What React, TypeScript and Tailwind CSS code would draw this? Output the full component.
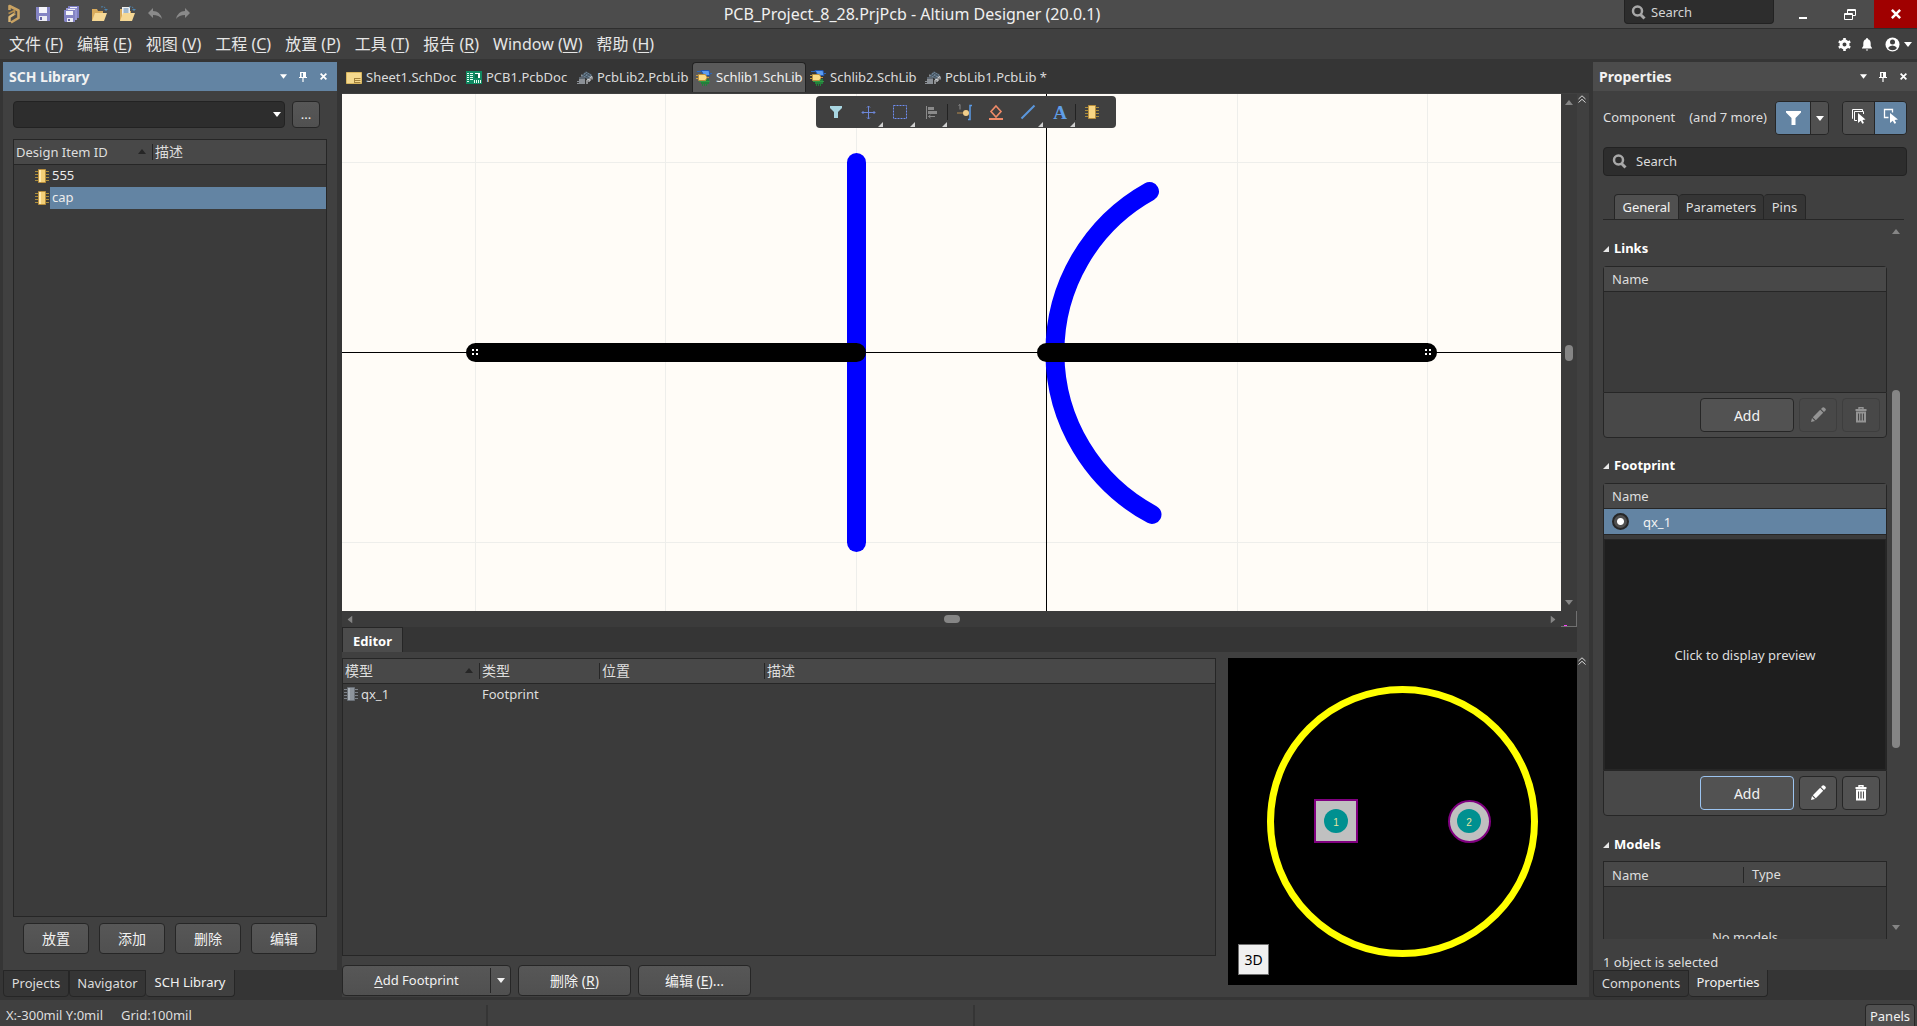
import React from 'react';
import clsx from 'clsx';

interface IconProps {
  className?: string;
}

const menuItems = [
  { label: '文件', hotkey: 'F' },
  { label: '编辑', hotkey: 'E' },
  { label: '视图', hotkey: 'V' },
  { label: '工程', hotkey: 'C' },
  { label: '放置', hotkey: 'P' },
  { label: '工具', hotkey: 'T' },
  { label: '报告', hotkey: 'R' },
  { label: 'Window', hotkey: 'W' },
  { label: '帮助', hotkey: 'H' },
];

const panelButton =
  'flex items-center justify-center rounded-[4px] border border-[#262626] bg-gradient-to-b from-[#575757] to-[#505050] text-[#f2f2f2]';

// Title bar icons
const AltiumLogo = () => (
  <svg width="14" height="20" viewBox="0 0 14 20" fill="none" strokeLinejoin="round">
    <path d="M2.500 6V2L11.500 6.500v7.500L4 18.500" stroke="#c9a262" strokeWidth="2.600" />
    <path d="M2.500 18v-5L8 9.500" stroke="#dbb878" strokeWidth="2.400" />
    <path d="M1.500 9.500L7.500 6.500v4" stroke="#b18b4d" strokeWidth="1.600" />
  </svg>
);

const SaveIcon = () => (
  <svg width="16" height="16" viewBox="0 0 16 16">
    <path d="M1 1h14v14H3l-2-2z" fill="#8484c4" />
    <path d="M4 1h8v6H4z" fill="#f5f5fa" />
    <path d="M4 10h8v5H4z" fill="#ececf4" />
    <path d="M5 11h2v3H5z" fill="#6464a4" />
  </svg>
);

const SaveAllIcon = () => (
  <svg width="17" height="16" viewBox="0 0 17 16">
    <path d="M5 0h11v12H5z" fill="#7c7cc0" />
    <path d="M7 1h7v2H7z" fill="#f0f0f8" />
    <path d="M3 2h11v12H3z" fill="#9696d4" />
    <path d="M5 3h7v3H5z" fill="#f0f0f8" />
    <path d="M1 4h11v12H2l-1-1z" fill="#8484c4" />
    <path d="M3 5h7v4H3z" fill="#f5f5fa" />
    <path d="M4 12h6v4H4z" fill="#ececf4" />
    <path d="M5 13h2v2H5z" fill="#6464a4" />
  </svg>
);

const OpenIcon = ({ withPage = false }: { withPage?: boolean }) => (
  <svg width="17" height="16" viewBox="0 0 17 16">
    <path d="M1 3h5l1 2h5v10H1z" fill="#d9ab5c" />
    {withPage && (
      <>
        <path d="M3 1h8v9H3z" fill="#f0f0f0" />
        <path d="M4.500 3h5M4.500 5h5M4.500 7h5" stroke="#4f7fae" />
      </>
    )}
    <path d="M4 7h12l-3 8H1z" fill="#f6d895" />
    <path d="M10 1q4-1 5 2.500" fill="none" stroke="#4c86b4" strokeDasharray="2 1" />
    <path d="M13 3h4l-2 2z" fill="#4c86b4" />
  </svg>
);

const UndoIcon = ({ className }: IconProps) => (
  <svg width="16" height="14" viewBox="0 0 16 14" className={className}>
    <path d="M6 1v3q7 0 9 8-3-4-9-4v3L1 6z" fill="#8a8a8a" />
  </svg>
);

const Magnifier = () => (
  <svg width="15" height="15" viewBox="0 0 15 15" fill="none" stroke="#a8a8a8" className="shrink-0">
    <circle cx="6.500" cy="6" r="4.500" strokeWidth="2.500" />
    <path d="M9.500 9.500l4 4" strokeWidth="3" />
  </svg>
);

const Caret = ({ className }: IconProps) => (
  <svg width="8" height="5" viewBox="0 0 8 5" className={className} fill="currentColor">
    <path d="M0 0h8L4 5z" />
  </svg>
);

const PinIcon = () => (
  <svg width="8" height="10" viewBox="0 0 8 10" fill="#fff">
    <path d="M1 0h6v5h1v1H4.600v4H3.400V6H0V5h1zM2.500 1v4H4V1z" fillRule="evenodd" />
  </svg>
);

const CrossIcon = ({ size = 7 }: { size?: number }) => (
  <svg width={size} height={size} viewBox="0 0 8 8" stroke="#fff" strokeWidth="2">
    <path d="M.7.700l6.600 6.600M7.300.700L.7 7.300" />
  </svg>
);

const ChipIcon = ({ gray = false }: { gray?: boolean }) => (
  <svg width="14" height="14" viewBox="0 0 14 14">
    <path d="M0 2.500h14M0 5.500h14M0 8.500h14M0 11.500h14" stroke={gray ? '#7b8087' : '#a98c3b'} />
    <path d="M3.500.5h7v13h-7z" fill={gray ? '#8d949c' : '#f3cf77'} stroke={gray ? '#6b7178' : '#b98f3c'} />
    <path d="M4 1h2v12H4z" fill={gray ? '#aab1b8' : '#ffe9ae'} />
  </svg>
);

const DoubleChevron = () => (
  <svg width="8" height="8" viewBox="0 0 8 8" fill="none" stroke="#d8d8d8">
    <path d="M.5 4L4 .800 7.500 4M.5 7.500L4 4.300l3.500 3.200" />
  </svg>
);

const PencilIcon = () => (
  <svg width="16" height="16" viewBox="0 0 16 16" fill="currentColor">
    <path d="M1 15l1-4 3 3zM2.800 10.200l7.400-7.400 3 3-7.400 7.400zM11 2l1.500-1.500q1-.8 2 .2l.8.800q1 1 .2 2L14 5z" />
  </svg>
);

const TrashIcon = () => (
  <svg width="12" height="16" viewBox="0 0 12 16" fill="none" stroke="currentColor">
    <path d="M.5 3h11" strokeWidth="2" />
    <path d="M4 2V.700h4V2" strokeWidth="1.400" />
    <path d="M2 5.500h8v9H2z" strokeWidth="2" />
    <path d="M4.700 6v8M7.300 6v8" strokeWidth="1.300" />
  </svg>
);

// Document tab icons
const SheetIcon = () => (
  <svg width="16" height="12" viewBox="0 0 16 12" className="shrink-0">
    <path d="M.5.5h15v11H.5z" fill="#f5d98d" stroke="#d9b65f" />
    <path d="M8.500 6.500h6M8.500 8.500h6M8.500 10.500h6M8.500 6v5" stroke="#a3823c" />
  </svg>
);

const PcbIcon = () => (
  <svg width="16" height="13" viewBox="0 0 16 13" className="shrink-0">
    <path d="M0 0h16v13H0z" fill="#108a62" />
    <path d="M1 2.500h2M4 2.500h3M1 4.500h2M4 4.500h3M1 6.500h2M4 6.500h3M1 8.500h2M4 8.500h3M1 10.500h2" stroke="#e6fff3" />
    <path d="M9 2h5v5H9z" fill="#fff" />
    <path d="M9 3h3v4H9z" fill="#0c6e4f" />
    <path d="M8.500 9v3M10.500 9v3M12.500 9v3M14.500 9v3" stroke="#e6fff3" />
  </svg>
);

const PcbLibIcon = () => (
  <svg width="16" height="14" viewBox="0 0 16 14" className="shrink-0">
    <path d="M4 5l5-4.500L15 4l-4 4z" fill="#6f8496" />
    <path d="M6 3.500l6 3.500M8 1.500l5.500 3.500M6 5.500l5-4M8.500 7l4.500-4.500" stroke="#42505c" />
    <path d="M2 6h6v7H2z" fill="#8b9096" />
    <path d="M2 6h6v2H2z" fill="#5c6670" />
    <path d="M0 10.500h2M0 12.500h2M4.500 3.500v2" stroke="#8b9096" />
    <path d="M10 13V9l2-1v3M13 10V6.500L15 5.500v3" stroke="#e3e6e9" fill="none" />
  </svg>
);

const SchLibIcon = () => (
  <svg width="16" height="16" viewBox="0 0 16 16" className="shrink-0">
    <path d="M1 1.500h6M11 3.500h5" stroke="#2e68b8" />
    <path d="M5 .5h8l1 5H8z" fill="#5c9cf0" stroke="#2057b0" />
    <path d="M5 9h8v5H5zM6 14v2h1v-2zM8 14v2h1v-2zM10 14v2h1v-2z" fill="#23803a" />
    <path d="M3 11.500h11" stroke="#2f9a45" />
    <path d="M0 5.500h4M0 8.500h4M10 7.500h3" stroke="#c89c3f" />
    <path d="M2.500 4.500h7l1.500 3-1.500 3h-7z" fill="#fbdc87" stroke="#b98f3c" />
  </svg>
);

const documents = [
  { name: 'Sheet1.SchDoc', icon: <SheetIcon />, width: 'w-[120px]' },
  { name: 'PCB1.PcbDoc', icon: <PcbIcon />, width: 'w-[111px]' },
  { name: 'PcbLib2.PcbLib', icon: <PcbLibIcon />, width: 'w-[119px]' },
  { name: 'Schlib1.SchLib', icon: <SchLibIcon />, width: 'w-[114px]', active: true },
  { name: 'Schlib2.SchLib', icon: <SchLibIcon />, width: 'w-[115px]' },
  { name: 'PcbLib1.PcbLib *', icon: <PcbLibIcon />, width: 'w-[132px]' },
];

const titleButton = 'flex w-[28px] items-center justify-center';

const TitleBar = () => (
  <header className="flex h-[29px] shrink-0 items-center border-b border-[#2e2e2e] bg-[#4c4c4c]">
    <div className="flex w-[200px] items-center pl-[7px]">
      <AltiumLogo />
      <div className="ml-[8px] flex items-center">
        <button aria-label="Save" className={titleButton}><SaveIcon /></button>
        <button aria-label="Save all" className={titleButton}><SaveAllIcon /></button>
        <button aria-label="Open" className={titleButton}><OpenIcon /></button>
        <button aria-label="Open document" className={titleButton}><OpenIcon withPage /></button>
        <button aria-label="Undo" className={titleButton}><UndoIcon /></button>
        <button aria-label="Redo" className={titleButton}><UndoIcon className="-scale-x-100" /></button>
      </div>
    </div>
    <h1 className="flex-1 text-center text-[16px] text-[#f0f0f0]">
      PCB_Project_8_28.PrjPcb - Altium Designer (20.0.1)
    </h1>
    <label className="flex h-[24px] w-[150px] items-center gap-[5px] self-start rounded-b-[4px] border border-t-0 border-[#222] bg-[#2d2d2d] px-[6px] pt-[2px]">
      <Magnifier />
      <input
        type="text"
        placeholder="Search"
        className="w-full min-w-0 bg-transparent text-[13px] outline-none placeholder:text-[#d4d4d4]"
      />
    </label>
    <button aria-label="Minimize" className="ml-[10px] flex h-full w-[38px] items-center justify-center pt-[7px]">
      <span className="h-[2px] w-[8px] bg-white" />
    </button>
    <button aria-label="Restore" className="ml-[9px] flex h-full w-[38px] items-center justify-center">
      <svg width="12" height="11" viewBox="0 0 12 11" fill="none" stroke="#fff">
        <path d="M.5 4.500h8v6h-8zM.5 5.500h8" />
        <path d="M3.500 4.500v-4h8v6h-3M3.500 1.500h8" />
      </svg>
    </button>
    <button aria-label="Close" className="ml-[5px] flex h-full w-[43px] items-center justify-center bg-[#a00000]">
      <CrossIcon size={10} />
    </button>
  </header>
);

const MenuBar = () => (
  <nav className="flex h-[30px] shrink-0 items-center bg-[#404040] pl-[2px]">
    {menuItems.map((item) => (
      <button key={item.hotkey} className="px-[7px] text-[16px] whitespace-nowrap text-[#e6e6e6]">
        {item.label} (<span className="underline underline-offset-2">{item.hotkey}</span>)
      </button>
    ))}
    <div className="ml-auto flex items-center pr-[5px] text-white">
      <button aria-label="Settings" className="mr-[10px]">
        <svg width="13" height="13" viewBox="0 0 13 13" fill="none" stroke="currentColor">
          <circle cx="6.500" cy="6.500" r="3.500" strokeWidth="3" />
          <path d="M6.500 0v2M6.500 11v2M.8 3.300l1.900 1M10.300 8.700l1.900 1M.8 9.700l1.900-1M10.300 4.300l1.900-1" strokeWidth="2.600" />
        </svg>
      </button>
      <button aria-label="Notifications" className="mr-[12px]">
        <svg width="12" height="13" viewBox="0 0 12 13" fill="currentColor">
          <path d="M6 0q1 0 1 1.200Q9.700 2 9.700 5.500V8L11 10v.5H1V10l1.300-2V5.500Q2.300 2 5 1.200 5 0 6 0zM4.700 11.500h2.600L6 13z" />
        </svg>
      </button>
      <button aria-label="Account" className="flex items-center gap-[4px]">
        <svg width="15" height="15" viewBox="0 0 15 15">
          <circle cx="7.500" cy="7.500" r="7" fill="#fff" />
          <circle cx="7.500" cy="5" r="2.500" fill="#404040" />
          <path d="M3 11q1.500-2.500 4.500-2.500T12 11q-1.500 2.200-4.500 2.200T3 11z" fill="#404040" />
        </svg>
        <Caret />
      </button>
    </div>
  </nav>
);

const PanelHeader = ({ title, focused = false }: { title: string; focused?: boolean }) => (
  <div
    className={clsx(
      'flex h-[29px] shrink-0 items-center px-[6px] text-white',
      focused ? 'bg-[#6384a3]' : 'bg-[#4c4c4c]'
    )}
  >
    <h2 className="flex-1 text-[14px] font-bold text-[#f2f2f2]">{title}</h2>
    <button aria-label="Panel menu" className="mr-[12px]"><Caret className="h-[5px] w-[7px]" /></button>
    <button aria-label="Pin panel" className="mr-[13px]"><PinIcon /></button>
    <button aria-label="Close panel" className="mr-[4px]"><CrossIcon /></button>
  </div>
);

const PanelTabs = ({ tabs, active }: { tabs: { name: string; width: string }[]; active: string }) => (
  <div role="tablist" className="flex h-[27px] shrink-0 bg-[#353535]">
    {tabs.map((tab) => (
      <button
        key={tab.name}
        role="tab"
        aria-selected={tab.name === active}
        className={clsx(
          'rounded-b-[4px] border-r border-b border-[#262626] text-[13px] whitespace-nowrap',
          tab.width,
          tab.name === active ? 'bg-[#404040] text-[#f2f2f2]' : 'border-t border-l bg-[#353535] text-[#dcdcdc]'
        )}
      >
        {tab.name}
      </button>
    ))}
  </div>
);

const SchLibraryPanel = () => (
  <aside className="flex w-[334px] shrink-0 flex-col">
    <PanelHeader title="SCH Library" focused />
    <div className="flex min-h-0 flex-1 flex-col bg-[#404040] px-[10px] pt-[10px] pb-[16px]">
      <div className="flex h-[27px] items-center gap-[7px]">
        <div className="relative h-full w-[272px]">
          <select
            aria-label="Library"
            className="h-full w-full appearance-none rounded-[4px] border border-[#222] bg-[#2d2d2d] px-2 text-[13px]"
          >
            <option></option>
          </select>
          <Caret className="pointer-events-none absolute top-[11px] right-[4px] text-white" />
        </div>
        <button className={clsx(panelButton, 'h-full w-[28px] text-[13px]')}>...</button>
      </div>

      <div className="mt-[11px] min-h-0 flex-1 border border-[#262626] bg-[#3b3b3b] text-[13px]">
        <table className="w-full table-fixed border-collapse text-left">
          <thead>
            <tr className="h-[24px] border-b border-[#262626] bg-[#484848] text-[#dedede]">
              <th className="w-[139px] pl-[2px] font-normal">
                <div className="flex items-center justify-between border-r border-[#262626] pr-[6px] leading-4">
                  Design Item ID
                  <Caret className="rotate-180 text-[#262626]" />
                </div>
              </th>
              <th className="pl-[2px] text-[14px] leading-5 font-normal">描述</th>
            </tr>
          </thead>
          <tbody>
            {['555', 'cap'].map((name) => (
              <tr key={name} className="h-[22px] text-[#ececec]">
                <td colSpan={2} className="p-0">
                  <div className="flex h-[22px] items-center pl-[21px]">
                    <ChipIcon />
                    <span
                      className={clsx(
                        'ml-[1px] flex h-full flex-1 items-center pl-[2px]',
                        name === 'cap' && 'bg-[#6384a3]'
                      )}
                    >
                      {name}
                    </span>
                  </div>
                </td>
              </tr>
            ))}
          </tbody>
        </table>
      </div>

      <div className="mt-[6px] flex gap-[10px] pl-[10px]">
        {['放置', '添加', '删除', '编辑'].map((label) => (
          <button key={label} className={clsx(panelButton, 'h-[31px] w-[66px] text-[14px]')}>
            {label}
          </button>
        ))}
      </div>
    </div>
    <PanelTabs
      active="SCH Library"
      tabs={[
        { name: 'Projects', width: 'w-[66px]' },
        { name: 'Navigator', width: 'w-[77px]' },
        { name: 'SCH Library', width: 'w-[89px]' },
      ]}
    />
  </aside>
);

const tools = [
  {
    name: 'Filter',
    icon: <path d="M4 4h12v2l-4 4v6H8v-6L4 6z" fill="#a9d6e2" />,
  },
  {
    name: 'Move',
    more: true,
    icon: <path d="M10.500 4v13M4 10.500h13M9 5.500l1.500-1.500L12 5.500M9 15.500l1.500 1.500 1.500-1.500M5.500 9L4 10.500 5.500 12M15.500 9l1.500 1.500-1.500 1.500" stroke="#6c86d8" />,
  },
  {
    name: 'Selection',
    more: true,
    icon: <path d="M3.500 3.500h13v13h-13z" stroke="#6f8df0" strokeDasharray="2 1" />,
  },
  {
    name: 'Align',
    more: true,
    separated: true,
    icon: (
      <>
        <path d="M4.500 4v13" stroke="#8a8a8a" />
        <path d="M6 5h6v3H6zM6 9h9v3H6z" fill="#8a8a8a" />
        <path d="M13 14.500H6.500M8.500 13l-2 1.500 2 1.500" stroke="#8a8a8a" />
      </>
    ),
  },
  {
    name: 'Place pin',
    icon: (
      <>
        <path d="M3 11h8" stroke="#b48a4c" />
        <circle cx="12" cy="11" r="3" fill="#f2cf8b" />
        <path d="M18 3.500h-2v14h-2" stroke="#5a9ae6" strokeWidth="1.500" />
        <path d="M4.500 3.500L6 2.500v5" stroke="#8a8a8a" />
      </>
    ),
  },
  {
    name: 'Place IEEE symbol',
    icon: (
      <>
        <path d="M10 4l5 5.500-5 5.500-5-5.500z" stroke="#ef8a68" strokeWidth="1.600" />
        <path d="M3 17h14" stroke="#ef8a68" strokeWidth="2" />
      </>
    ),
  },
  {
    name: 'Place line',
    more: true,
    icon: <path d="M3.500 16.500l13-13" stroke="#5a96dc" strokeWidth="2" />,
  },
  {
    name: 'Place text',
    more: true,
    separated: true,
    icon: (
      <text x="10" y="17" textAnchor="middle" fontSize="19" fontWeight="bold" fontFamily="Liberation Serif, serif" fill="#5f9ee8">
        A
      </text>
    ),
  },
  {
    name: 'Place part',
    icon: (
      <>
        <path d="M3 5.500h14M3 8.500h14M3 11.500h14M3 14.500h14" stroke="#a98c3b" />
        <path d="M6.500 3.500h7v13h-7z" fill="#f8d684" stroke="#b98f3c" />
      </>
    ),
  },
];

const ActiveBar = () => (
  <div className="absolute top-[34px] left-1/2 flex h-[32px] -translate-x-1/2 rounded-[4px] bg-[#404040] pr-[8px] pl-[4px]">
    {tools.map((tool) => (
      <button key={tool.name} aria-label={tool.name} className="relative flex w-[32px] items-center justify-center pb-[1px]">
        <svg width="20" height="20" viewBox="0 0 20 20" fill="none">
          {tool.icon}
        </svg>
        {tool.more && (
          <svg width="5" height="5" viewBox="0 0 5 5" className="absolute right-[1px] bottom-[1px]" fill="#d0d0d0">
            <path d="M5 0v5H0z" />
          </svg>
        )}
        {tool.separated && <span className="absolute top-[8px] right-0 h-[16px] w-px bg-[#222]" />}
      </button>
    ))}
  </div>
);

const SchematicCanvas = () => (
  <svg
    viewBox="0 0 1219 517"
    preserveAspectRatio="xMidYMid slice"
    className="absolute inset-0 h-full w-full bg-[#fffcf7]"
    fill="none"
  >
    <path
      d="M133.500 0v517M323.500 0v517M514.500 0v517M895.500 0v517M1085.500 0v517M0 68.500h1219M0 448.500h1219"
      stroke="#eeeeeb"
    />
    <path d="M704.500 0v517M0 258.500h1219" stroke="#000" />
    <g stroke="#0000ff" strokeWidth="19" strokeLinecap="round">
      <path d="M514.500 68.500v380" />
      <path d="M807.500 97.500A184 184 0 0 0 810 420.500" />
    </g>
    <path d="M133.500 258.500h381M704.500 258.500h381" stroke="#000" strokeWidth="19" strokeLinecap="round" />
    {[130, 1083].map((x) => (
      <path
        key={x}
        d={`M${x} 255h2v2h-2zM${x + 4} 255h2v2h-2zM${x} 259h2v2h-2zM${x + 4} 259h2v2h-2z`}
        fill="#fff"
      />
    ))}
  </svg>
);

const Editor = () => (
  <section className="flex h-[370px] shrink-0">
    <div className="flex min-w-0 flex-1 flex-col">
      <div className="flex h-[25px] shrink-0 bg-[#353535]">
        <button className="w-[61px] border border-b-0 border-[#262626] bg-[#4c4c4c] pt-[4px] text-[13px] font-bold text-white">
          Editor
        </button>
      </div>
      <div className="flex min-h-0 flex-1 gap-[12px] bg-[#404040] pt-[6px]">
        <div className="flex min-w-0 flex-1 flex-col">
          <div className="h-[298px] border border-[#262626] bg-[#3b3b3b]">
            <table className="w-full table-fixed border-collapse text-left text-[13px]">
              <thead>
                <tr className="h-[24px] border-b border-[#262626] bg-[#484848] text-[14px] text-[#dedede]">
                  <th className="w-[137px] pl-[2px] font-normal">
                    <div className="flex items-center justify-between border-r border-[#262626] pr-[6px] leading-4">
                      模型
                      <Caret className="rotate-180 text-[#262626]" />
                    </div>
                  </th>
                  <th className="w-[120px] pl-[2px] font-normal">
                    <div className="border-r border-[#262626] leading-4">类型</div>
                  </th>
                  <th className="w-[165px] pl-[2px] font-normal">
                    <div className="border-r border-[#262626] leading-4">位置</div>
                  </th>
                  <th className="pl-[2px] leading-4 font-normal">描述</th>
                </tr>
              </thead>
              <tbody>
                <tr className="h-[22px] text-[#dedede]">
                  <td className="pl-[1px]">
                    <div className="flex items-center gap-[3px]">
                      <ChipIcon gray />
                      qx_1
                    </div>
                  </td>
                  <td className="pl-[2px]">Footprint</td>
                  <td></td>
                  <td></td>
                </tr>
              </tbody>
            </table>
          </div>
          <div className="mt-[9px] flex gap-[7px] text-[14px]">
            <div className={clsx(panelButton, 'h-[31px] w-[169px]')}>
              <button className="flex-1 text-[13px]">
                <span className="underline underline-offset-2">A</span>dd Footprint
              </button>
              <button aria-label="More footprint actions" className="flex h-[25px] w-[20px] items-center justify-center border-l border-[#262626]">
                <Caret />
              </button>
            </div>
            <button className={clsx(panelButton, 'h-[31px] w-[113px]')}>
              <span>删除 (<span className="underline underline-offset-2">R</span>)</span>
            </button>
            <button className={clsx(panelButton, 'h-[31px] w-[113px]')}>
              <span>编辑 (<span className="underline underline-offset-2">E</span>)...</span>
            </button>
          </div>
        </div>
        <div className="relative h-[327px] w-[349px] shrink-0 bg-black">
          <svg viewBox="0 0 349 327" className="h-full w-full">
            <circle cx="174.500" cy="163.500" r="132" fill="none" stroke="#ffff00" strokeWidth="7" />
            <path d="M87 142h42v42H87z" fill="#c0c0c0" stroke="#800080" strokeWidth="2" />
            <circle cx="241.500" cy="163.500" r="20.500" fill="#c0c0c0" stroke="#800080" strokeWidth="2" />
            <circle cx="108" cy="163" r="12" fill="#009090" />
            <circle cx="241" cy="163" r="12" fill="#009090" />
            <g fill="#e6e6a0" fontSize="10" textAnchor="middle" fontFamily="Liberation Sans, sans-serif">
              <text x="108" y="168">1</text>
              <text x="241" y="168">2</text>
            </g>
          </svg>
          <button className="absolute bottom-[10px] left-[10px] h-[31px] w-[31px] border border-[#707070] bg-[#f0f0f0] text-[14px] text-black">
            3D
          </button>
        </div>
      </div>
    </div>
    <div className="w-[12px] bg-[#404040] pt-[30px] pl-[1px]">
      <button aria-label="Collapse editor" className="block"><DoubleChevron /></button>
    </div>
  </section>
);

const Workspace = () => (
  <main className="relative mr-[4px] ml-[5px] flex min-w-0 flex-1 flex-col">
    <div role="tablist" className="flex h-[32px] shrink-0 border-b border-[#404040] pb-[1px]">
      {documents.map((doc) => (
        <button
          key={doc.name}
          role="tab"
          aria-selected={!!doc.active}
          className={clsx(
            'flex items-center gap-[4px] rounded-t-[4px] border border-b-0 pl-[3px] text-[13px] whitespace-nowrap',
            doc.width,
            doc.active ? 'border-[#222] bg-[#5a5a5a] text-[#f2f2f2]' : 'border-transparent text-[#dcdcdc]'
          )}
        >
          {doc.icon}
          {doc.name}
        </button>
      ))}
    </div>

    <div className="flex min-h-0 flex-1">
      <div className="flex min-w-0 flex-1 flex-col">
        <div className="flex min-h-0 flex-1">
          <div className="relative min-w-0 flex-1">
            <SchematicCanvas />
          </div>
          <div className="flex w-[16px] flex-col items-center justify-between bg-[#3b3b3b] py-[6px] text-[#858585]">
            <Caret className="rotate-180" />
            <span className="h-[16px] w-[8px] rounded-full bg-[#858585]" />
            <Caret />
          </div>
        </div>
        <div className="flex h-[16px] shrink-0 bg-[#3b3b3b]">
          <div className="flex flex-1 items-center justify-between px-[4px] text-[#858585]">
            <Caret className="rotate-90" />
            <span className="h-[8px] w-[16px] rounded-full bg-[#858585]" />
            <Caret className="-rotate-90" />
          </div>
          <div className="flex w-[16px] items-end border-r border-b border-[#707070]">
            <span className="ml-[3px] h-px w-[3px] bg-[#ff40ff]" />
          </div>
        </div>
      </div>
      <div className="w-[12px] bg-[#404040] pt-px pl-[1px]">
        <button aria-label="Collapse document area" className="block"><DoubleChevron /></button>
      </div>
    </div>
    <Editor />
    <ActiveBar />
  </main>
);

const GroupTitle = ({ children }: { children: React.ReactNode }) => (
  <h3 className="flex h-[20px] items-center gap-[5px] text-[13px] font-bold text-white">
    <svg width="6" height="6" viewBox="0 0 6 6" fill="#e8e8e8">
      <path d="M6 0v6H0z" />
    </svg>
    {children}
  </h3>
);

const GroupFooter = ({ disabled = false }: { disabled?: boolean }) => {
  const iconButton = clsx(
    'flex h-[34px] w-[38px] items-center justify-center rounded-[4px] border',
    disabled ? 'border-[#3e3e3e] text-[#949494]' : 'border-[#262626] bg-[#525252] text-white'
  );

  return (
    <div className="flex h-[46px] items-start justify-end gap-[5px] rounded-b-[4px] border border-[#262626] bg-[#484848] pt-[5px] pr-[6px]">
      <button
        className={clsx(
          'h-[34px] w-[94px] rounded-[4px] border bg-[#525252] pt-[1px] text-[14px] text-[#f2f2f2]',
          disabled ? 'border-[#262626]' : 'border-[#9cc4f0]'
        )}
      >
        Add
      </button>
      <button aria-label="Edit" disabled={disabled} className={iconButton}><PencilIcon /></button>
      <button aria-label="Delete" disabled={disabled} className={iconButton}><TrashIcon /></button>
    </div>
  );
};

const tableHead =
  'flex h-[25px] items-center border-b border-[#262626] bg-[#484848] px-[8px] pt-[2px] text-[13px] text-[#dedede]';

const tab = 'rounded-t-[4px] border border-b-0 border-[#262626] pt-[2px]';

const PropertiesPanel = () => (
  <aside className="flex w-[324px] shrink-0 flex-col">
    <PanelHeader title="Properties" />
    <div className="flex min-h-0 flex-1 flex-col bg-[#404040] pl-[10px] text-[13px] text-[#dedede]">
      <div className="mt-[10px] flex h-[34px] shrink-0 items-center pr-[10px] whitespace-nowrap">
        <span>Component</span>
        <span className="ml-[14px] flex-1">(and 7 more)</span>
        <div className="flex h-[34px] w-[54px] overflow-hidden rounded-[4px] border border-[#262626] text-white">
          <button aria-label="Filter" className="flex flex-1 items-center justify-center bg-[#6384a3]">
            <svg width="15" height="14" viewBox="0 0 15 14" fill="currentColor">
              <path d="M0 0h15v1.500L9.500 7v7h-4V7L0 1.500z" />
            </svg>
          </button>
          <button aria-label="Filter options" className="flex w-[18px] items-center justify-center border-l border-[#262626] bg-[#505050]">
            <Caret />
          </button>
        </div>
        <div className="ml-[13px] flex h-[34px] w-[65px] overflow-hidden rounded-[4px] border border-[#262626]">
          <button aria-label="Select touching" className="flex flex-1 items-center justify-center border-r border-[#262626] bg-[#505050] pb-[4px]">
            <svg width="16" height="16" viewBox="0 0 16 16" fill="none" stroke="#fff">
              <path d="M2 10.500H1.500v-9h10V3" />
              <path d="M6 12.500H3.500v-9h9V6" />
              <path d="M7 5l7.500 6.500-3 .5 1.500 3-1.800.8-1.400-3L7 15z" fill="#fff" stroke="none" />
            </svg>
          </button>
          <button aria-label="Select single" className="flex w-[31px] items-center justify-center bg-[#6384a3] pb-[4px]">
            <svg width="16" height="16" viewBox="0 0 16 16" fill="none" stroke="#fff">
              <path d="M5.500 9.500h-4v-8h8v3" strokeWidth="1.300" />
              <path d="M7 5l8 6.500-3.400.5 1.600 3-1.800.8-1.600-3L7 15z" fill="#fff" stroke="none" />
            </svg>
          </button>
        </div>
      </div>

      <label className="mt-[12px] mr-[10px] flex h-[29px] shrink-0 items-center gap-[9px] rounded-[4px] border border-[#222] bg-[#2d2d2d] px-[8px]">
        <Magnifier />
        <input type="text" placeholder="Search" className="w-full bg-transparent outline-none placeholder:text-[#dcdcdc]" />
      </label>

      <div role="tablist" className="mt-[18px] mr-[13px] flex h-[26px] shrink-0 border-b border-[#262626] pl-[11px]">
        <button role="tab" aria-selected className={clsx(tab, 'w-[65px] bg-[#505050] text-[#f2f2f2]')}>General</button>
        <button role="tab" className={clsx(tab, 'w-[85px] border-l-0 bg-[#353535]')}>Parameters</button>
        <button role="tab" className={clsx(tab, 'w-[42px] border-l-0 bg-[#353535]')}>Pins</button>
      </div>

      <div className="flex min-h-0 flex-1">
        <div className="w-[284px] overflow-hidden pt-[19px]">
          <GroupTitle>Links</GroupTitle>
          <div className="mt-[7px] rounded-t-[4px] border border-b-0 border-[#262626] bg-[#3b3b3b]">
            <div className={tableHead}>Name</div>
            <div className="h-[100px]" />
          </div>
          <GroupFooter disabled />

          <div className="mt-[18px]">
            <GroupTitle>Footprint</GroupTitle>
          </div>
          <div className="mt-[7px] rounded-t-[4px] border border-b-0 border-[#262626] bg-[#3b3b3b]">
            <div className={tableHead}>Name</div>
            <label className="flex h-[25px] items-center bg-[#6384a3] pl-[8px] text-[#f2f2f2]">
              <input
                type="radio"
                name="footprint"
                defaultChecked
                className="mr-[14px] h-[17px] w-[17px] appearance-none rounded-full border-2 border-[#262626] bg-[radial-gradient(circle,#fff_3px,#505050_4px)]"
              />
              <span className="pt-[2px]">qx_1</span>
            </label>
            <div className="h-[5px] border-t border-[#262626]" />
            <button className="flex h-[231px] w-full items-center justify-center border border-[#262626] bg-[#1e1e1e] pt-[2px]">
              Click to display preview
            </button>
          </div>
          <GroupFooter />

          <div className="mt-[19px]">
            <GroupTitle>Models</GroupTitle>
          </div>
          <div className="mt-[6px] border border-[#262626] bg-[#3b3b3b]">
            <div className={tableHead}>
              <span className="w-[132px] border-r border-[#262626] leading-4">Name</span>
              <span className="pl-[8px]">Type</span>
            </div>
            <div className="flex h-[102px] items-center justify-center">No models</div>
          </div>
        </div>
        <div className="ml-[4px] flex w-[10px] flex-col items-center pt-[9px] pb-[9px] text-[#858585]">
          <Caret className="rotate-180" />
          <span className="mt-[156px] h-[358px] w-[8px] rounded-full bg-[#858585]" />
          <Caret className="mt-auto" />
        </div>
      </div>
      <div className="flex h-[31px] shrink-0 items-end overflow-hidden leading-4">1 object is selected</div>
    </div>
    <PanelTabs
      active="Properties"
      tabs={[
        { name: 'Components', width: 'w-[96px]' },
        { name: 'Properties', width: 'w-[79px]' },
      ]}
    />
  </aside>
);

const StatusBar = () => (
  <footer className="flex h-[26px] shrink-0 bg-[#404040] text-[13px] text-[#dedede]">
    <div className="mt-[5px] flex w-[488px] items-center gap-[18px] border-r-2 border-[#353535] pl-[6px]">
      <span>X:-300mil Y:0mil</span>
      <span>Grid:100mil</span>
    </div>
    <div className="mt-[5px] w-[487px] border-r-2 border-[#353535]" />
    <button className="mt-[4px] mr-[2px] ml-auto w-[50px] rounded-t-[4px] border border-b-0 border-[#262626] bg-[#505050] pt-[2px] text-[#f2f2f2]">
      Panels
    </button>
  </footer>
);

const App = () => (
  <div className="flex h-screen w-full flex-col overflow-hidden bg-[#353535] font-['Noto_Sans','Noto_Sans_CJK_SC',sans-serif] select-none">
    <TitleBar />
    <MenuBar />
    <div className="flex min-h-0 flex-1 pt-[3px] pb-[3px] pl-[3px]">
      <SchLibraryPanel />
      <Workspace />
      <PropertiesPanel />
    </div>
    <StatusBar />
  </div>
);

export default App;
